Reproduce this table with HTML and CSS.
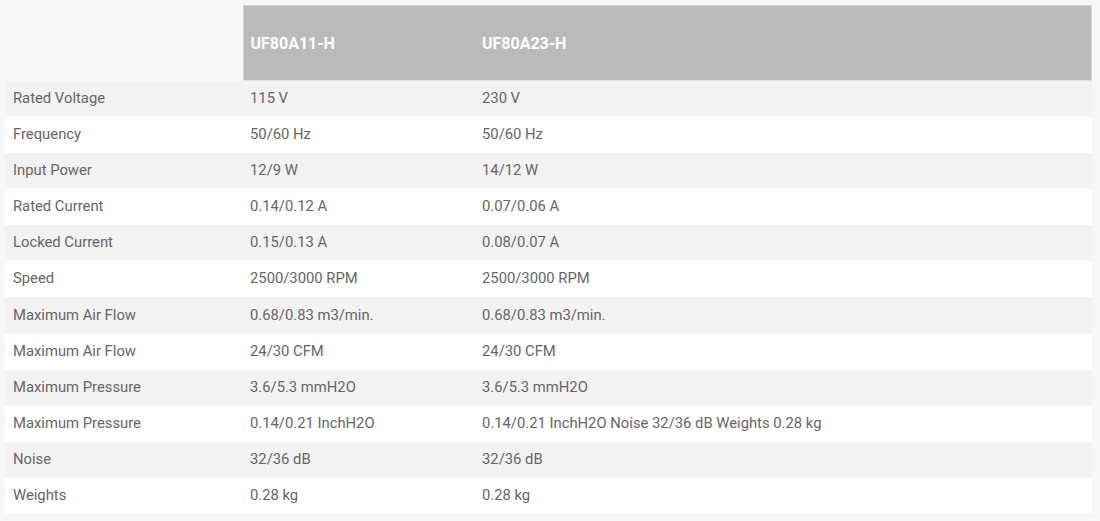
FILE: index.html
```html
<!DOCTYPE html>
<html>
<head>
<meta charset="utf-8">
<link rel="stylesheet" href="styles.css">
</head>
<body>
<table class="spec">
  <colgroup><col class="c1"><col class="c2"><col class="c3"></colgroup>
  <thead>
    <tr><th class="blank"></th><th class="h-mid">UF80A11-H</th><th class="h-last">UF80A23-H</th></tr>
  </thead>
  <tbody>
    <tr><td>Rated Voltage</td><td>115 V</td><td>230 V</td></tr>
    <tr><td>Frequency</td><td>50/60 Hz</td><td>50/60 Hz</td></tr>
    <tr><td>Input Power</td><td>12/9 W</td><td>14/12 W</td></tr>
    <tr><td>Rated Current</td><td>0.14/0.12 A</td><td>0.07/0.06 A</td></tr>
    <tr><td>Locked Current</td><td>0.15/0.13 A</td><td>0.08/0.07 A</td></tr>
    <tr><td>Speed</td><td>2500/3000 RPM</td><td>2500/3000 RPM</td></tr>
    <tr><td>Maximum Air Flow</td><td>0.68/0.83 m3/min.</td><td>0.68/0.83 m3/min.</td></tr>
    <tr><td>Maximum Air Flow</td><td>24/30 CFM</td><td>24/30 CFM</td></tr>
    <tr><td>Maximum Pressure</td><td>3.6/5.3 mmH2O</td><td>3.6/5.3 mmH2O</td></tr>
    <tr><td>Maximum Pressure</td><td>0.14/0.21 InchH2O</td><td>0.14/0.21 InchH2O Noise 32/36 dB Weights 0.28 kg</td></tr>
    <tr><td>Noise</td><td>32/36 dB</td><td>32/36 dB</td></tr>
    <tr><td>Weights</td><td>0.28 kg</td><td>0.28 kg</td></tr>
  </tbody>
</table>
</body>
</html>
```
FILE: styles.css
```css
html, body {
  margin: 0;
  padding: 0;
  background: #f7f7f7;
}
body {
  padding: 5px 8px 0 5px;
  font-family: Roboto, "Liberation Sans", sans-serif;
}
.spec {
  width: 1087px;
  border-collapse: collapse;
  table-layout: fixed;
  font-size: 14.8px;
  color: #666;
}
.c1 { width: 238px; }
.c2 { width: 232px; }
.spec th {
  background: #bbbbbb;
  color: #fff;
  font-weight: 700;
  font-size: 16px;
  text-align: left;
  height: 75px;
  padding: 0 7px;
  box-sizing: border-box;
  border-top: 1px solid #d4d4d4;
  border-bottom: 1px solid #e4e4e4;
}
.spec th.h-mid {
  border-left: 1px solid #d4d4d4;
}
.spec th.h-last {
  border-right: 1px solid #d4d4d4;
}
.spec th.blank {
  background: #f7f7f7;
  border: none;
}
.spec td {
  height: 36.17px;
  padding: 0 7px 2px;
  box-sizing: border-box;
  vertical-align: middle;
}
.spec td:first-child {
  padding-left: 8px;
}
.spec tbody tr:nth-child(odd) td {
  background: #f2f2f2;
}
.spec tbody tr:nth-child(even) td {
  background: #ffffff;
}
```
